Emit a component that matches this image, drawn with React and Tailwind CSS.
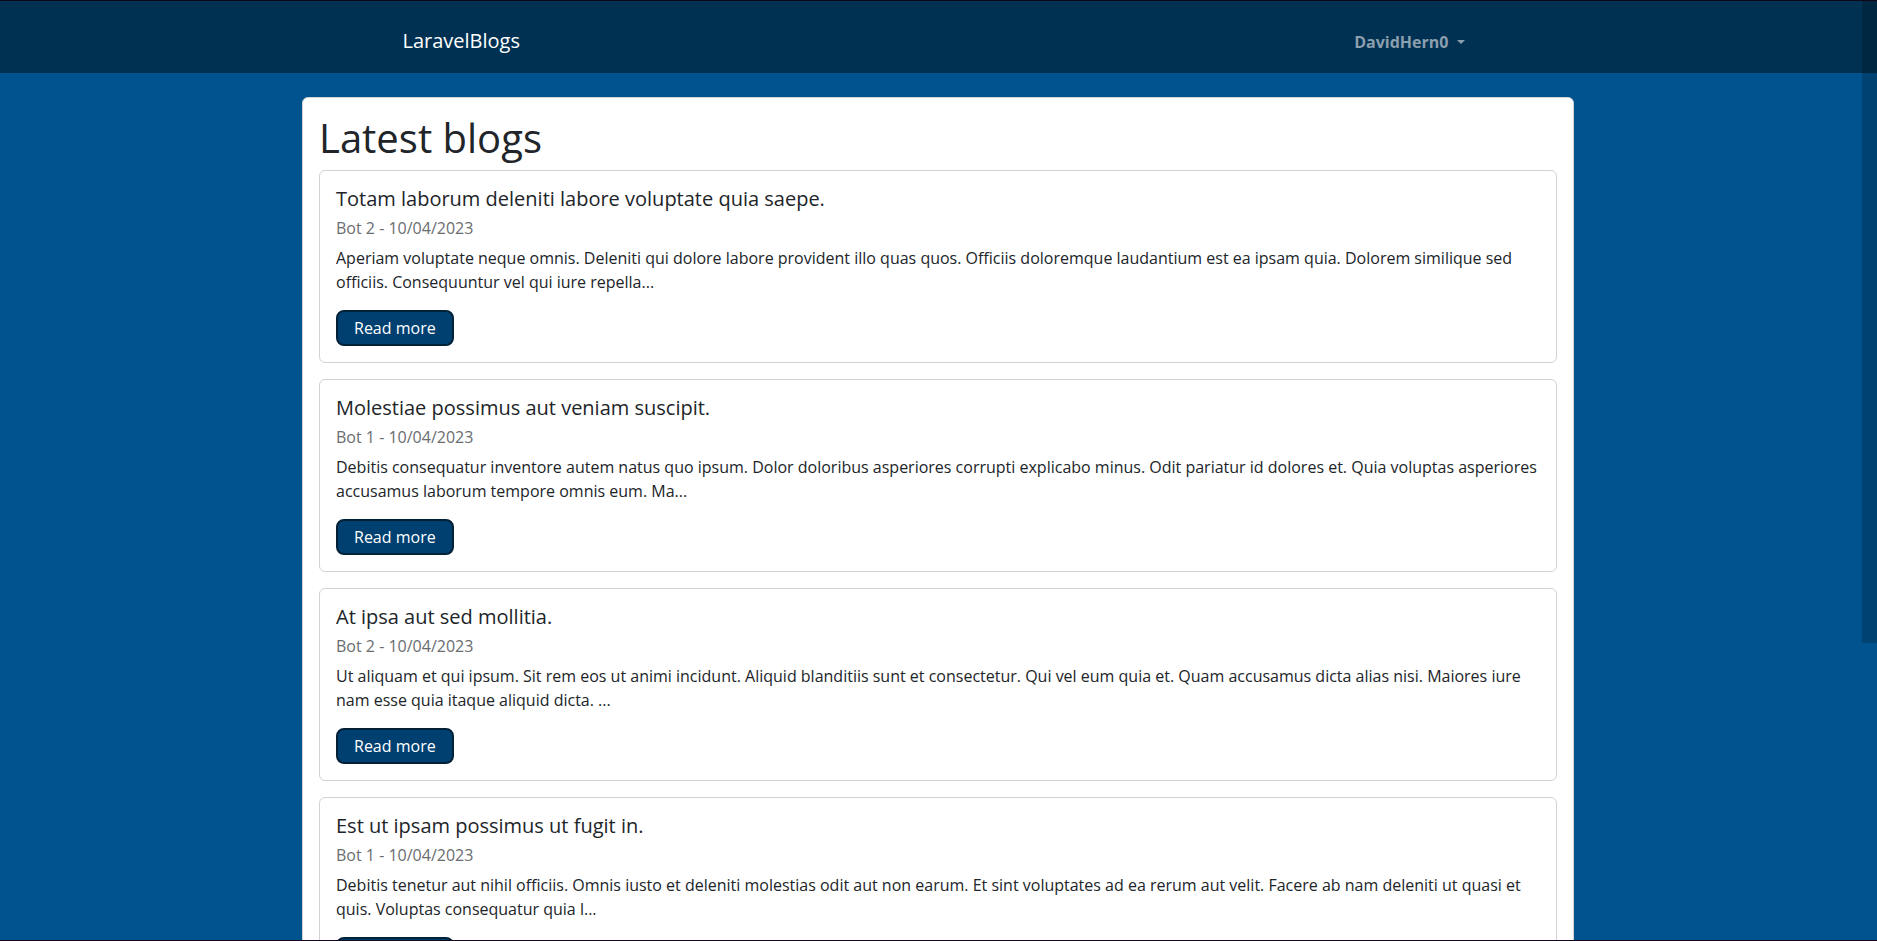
const posts = [
  {
    title: 'Totam laborum deleniti labore voluptate quia saepe.',
    meta: 'Bot 2 - 10/04/2023',
    text: 'Aperiam voluptate neque omnis. Deleniti qui dolore labore provident illo quas quos. Officiis doloremque laudantium est ea ipsam quia. Dolorem similique sed officiis. Consequuntur vel qui iure repella...',
  },
  {
    title: 'Molestiae possimus aut veniam suscipit.',
    meta: 'Bot 1 - 10/04/2023',
    text: 'Debitis consequatur inventore autem natus quo ipsum. Dolor doloribus asperiores corrupti explicabo minus. Odit pariatur id dolores et. Quia voluptas asperiores accusamus laborum tempore omnis eum. Ma...',
  },
  {
    title: 'At ipsa aut sed mollitia.',
    meta: 'Bot 2 - 10/04/2023',
    text: 'Ut aliquam et qui ipsum. Sit rem eos ut animi incidunt. Aliquid blanditiis sunt et consectetur. Qui vel eum quia et. Quam accusamus dicta alias nisi. Maiores iure nam esse quia itaque aliquid dicta. ...',
  },
  {
    title: 'Est ut ipsam possimus ut fugit in.',
    meta: 'Bot 1 - 10/04/2023',
    text: 'Debitis tenetur aut nihil officiis. Omnis iusto et deleniti molestias odit aut non earum. Et sint voluptates ad ea rerum aut velit. Facere ab nam deleniti ut quasi et quis. Voluptas consequatur quia l...',
  },
];

function Navbar() {
  return (
    <header className="h-[72px] shrink-0 bg-[#003152] pt-5">
      <nav className="mx-auto flex max-w-[1072px] items-baseline justify-between">
        <a href="#home" className="py-1 text-xl leading-8 text-white">
          LaravelBlogs
        </a>
        <button
          type="button"
          aria-haspopup="menu"
          className="flex items-center gap-2 px-2.5 text-base leading-6 font-bold text-[#8c9fae]"
        >
          DavidHern0
          <svg width="8" height="4" viewBox="0 0 8 4" fill="currentColor" aria-hidden="true">
            <path d="M0 0h8L4 4z" />
          </svg>
        </button>
      </nav>
    </header>
  );
}

function PostCard({ post }) {
  return (
    <article className="rounded-md border border-[#d2d2d2] p-4">
      <h2 className="mb-2 text-xl leading-6">{post.title}</h2>
      <p className="mb-2 text-base leading-[19px] text-[#6a6d70]">{post.meta}</p>
      <p className="mb-4 text-base leading-6">{post.text}</p>
      <a
        href="#post"
        className="block w-fit rounded-lg border-2 border-[#002138] bg-[#004070] px-4 py-1 text-base leading-6 text-white"
      >
        Read more
      </a>
    </article>
  );
}

export default function App() {
  return (
    <div className="relative flex h-screen flex-col overflow-hidden border-y border-[#12061a] bg-[#00538f] font-['Open_Sans',sans-serif] text-[#212529]">
      <Navbar />
      <main className="min-h-0 flex-1 overflow-hidden pt-6 pr-px">
        <section className="mx-auto max-w-[1272px] rounded-md border border-[#d2d2d2] bg-white p-4">
          <h1 className="mb-2 text-[40px] leading-[48px]">Latest blogs</h1>
          <div className="flex flex-col gap-4">
            {posts.map((post) => (
              <PostCard key={post.title} post={post} />
            ))}
          </div>
        </section>
      </main>
      <div aria-hidden="true" className="absolute top-0 right-0 h-[642px] w-[15px] bg-black/20" />
    </div>
  );
}
